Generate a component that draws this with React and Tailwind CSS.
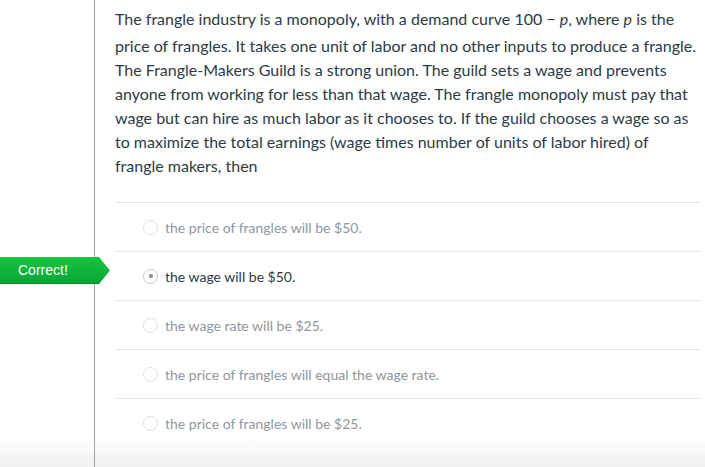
import React from "react";

const answers = [
  { text: "the price of frangles will be $50.", selected: false },
  { text: "the wage will be $50.", selected: true, correct: true },
  { text: "the wage rate will be $25.", selected: false },
  { text: "the price of frangles will equal the wage rate.", selected: false },
  { text: "the price of frangles will be $25.", selected: false },
];

function Radio({ selected }) {
  return (
    <span
      className={
        "flex h-[15px] w-[15px] shrink-0 items-center justify-center rounded-full border " +
        (selected ? "border-[#c9c9c9] bg-white" : "border-[#e0e0e0] bg-white")
      }
    >
      {selected && <span className="h-[4px] w-[4px] rounded-full bg-[#8a8a8a]" />}
    </span>
  );
}

function CorrectBanner() {
  return (
    <div className="absolute left-0 top-[5px] -ml-[115px] flex h-[27px] items-stretch">
      <div className="flex w-[99px] items-center border-b border-[#0a8a2a] bg-[linear-gradient(to_bottom,#12c640,#0aa533)] pl-[18px] text-[14px] text-white [font-family:'Liberation_Sans',Arial,sans-serif]">
        Correct!
      </div>
      <svg width="11" height="27" viewBox="0 0 11 27" className="block">
        <defs>
          <linearGradient id="g" x1="0" y1="0" x2="0" y2="1">
            <stop offset="0" stopColor="#12c640" />
            <stop offset="1" stopColor="#0aa533" />
          </linearGradient>
        </defs>
        <path d="M0 0 L0 27 L11 13.5 Z" fill="url(#g)" />
      </svg>
    </div>
  );
}

export default function App() {
  return (
    <div className="flex h-[467px] w-[705px] overflow-hidden bg-[linear-gradient(to_bottom,#ffffff_0px,#ffffff_436px,#f1f1f1_467px)] [font-family:Lato,'Noto_Sans',sans-serif]">
      <div className="w-[94px] shrink-0" />
      <div className="w-px shrink-0 bg-[#a3a3a3]" />
      <div className="flex flex-1 flex-col pl-[20px] pr-[4px]">
        <p className="pt-[3px] text-[16px] leading-[24px] text-[#2d3b45]">
          The frangle industry is a monopoly, with a demand curve{" "}
          <span className="inline-block leading-[31px]">
            100 − <i>p</i>
          </span>
          , where <i>p</i> is the price of frangles. It takes one unit of labor and no other inputs to
          produce a frangle. The Frangle-Makers Guild is a strong union. The guild sets a wage and
          prevents anyone from working for less than that wage. The frangle monopoly must pay that
          wage but can hire as much labor as it chooses to. If the guild chooses a wage so as to
          maximize the total earnings (wage times number of units of labor hired) of frangle makers,
          then
        </p>
        <div className="mt-[24px]">
          {answers.map((a, i) => (
            <div
              key={i}
              className="relative flex h-[49px] items-center border-t border-[#e6e6e6] pl-[28px]"
            >
              {a.correct && <CorrectBanner />}
              <Radio selected={a.selected} />
              <span
                className={
                  "ml-[7px] text-[14px] " + (a.selected ? "text-[#2d3b45]" : "text-[#8e979e]")
                }
              >
                {a.text}
              </span>
            </div>
          ))}
        </div>
      </div>
    </div>
  );
}
